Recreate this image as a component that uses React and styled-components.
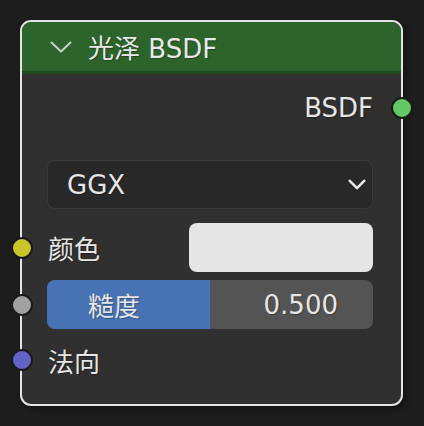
import React from "react";
import styled, { createGlobalStyle } from "styled-components";

const Global = createGlobalStyle`
  html, body { margin: 0; padding: 0; background: #1d1d1d; }
  body { font-family: "DejaVu Sans", "Noto Sans CJK SC", sans-serif; }
`;

const Page = styled.div`
  width: 424px;
  height: 426px;
  padding: 20px 0 0 20px;
  box-sizing: border-box;
`;

const Node = styled.div`
  width: 383px;
  height: 386px;
  box-sizing: border-box;
  border: 2px solid #e3e3e3;
  border-radius: 11px;
  background: #303030;
  display: flex;
  flex-direction: column;
  box-shadow: 3px 3px 6px rgba(0, 0, 0, 0.35);
`;

const Header = styled.div`
  height: 49px;
  border-bottom: 3px solid #1f4a1f;
  background: #2c642c;
  border-radius: 9px 9px 0 0;
  display: flex;
  align-items: center;
  padding-left: 28px;
  gap: 16px;
  color: #e8e8e8;
  font-size: 26px;
  text-shadow: 1px 1px 1px rgba(0, 0, 0, 0.3);
`;

const Body = styled.div`
  display: flex;
  flex-direction: column;
  padding: 14px 28px 0 25px;
  color: #e6e6e6;
  font-size: 26px;
  text-shadow: 1px 1px 1px rgba(0, 0, 0, 0.3);
`;

const Row = styled.div`
  position: relative;
  height: ${(p) => p.h || 40}px;
  margin-top: ${(p) => p.mt || 0}px;
  display: flex;
  align-items: center;
  justify-content: ${(p) => (p.right ? "flex-end" : "flex-start")};
`;

const Label = styled.span`
  padding-left: 1px;
`;

const Socket = styled.span`
  position: absolute;
  top: 50%;
  width: 18px;
  height: 18px;
  margin-top: -11px;
  border: 2px solid #1a1a1a;
  border-radius: 50%;
  background: ${(p) => p.color};
  ${(p) => (p.side === "right" ? "right: -40px;" : "left: -36px;")}
`;

const Dropdown = styled.div`
  height: 49px;
  margin-top: 32px;
  box-sizing: border-box;
  border: 1px solid #3a3a3a;
  border-radius: 8px;
  background: #282828;
  display: flex;
  align-items: center;
  justify-content: space-between;
  padding: 0 6px 0 19px;
`;

const Swatch = styled.div`
  margin-left: auto;
  width: 184px;
  height: 49px;
  border-radius: 8px;
  background: #e6e6e6;
`;

const Slider = styled.div`
  flex: 1;
  height: 49px;
  border-radius: 8px;
  background: #545454;
  position: relative;
  overflow: hidden;
  display: flex;
  align-items: center;
  justify-content: space-between;
  padding: 0 35px 0 41px;
  box-sizing: border-box;
`;

const Fill = styled.div`
  position: absolute;
  left: 0;
  top: 0;
  bottom: 0;
  background: #4772b3;
`;

const SliderText = styled.span`
  position: relative;
`;

const Chevron = ({ w, h, sw, color }) => (
  <svg width={w} height={h} viewBox={`0 0 ${w} ${h}`}>
    <polyline
      points={`${sw / 2 + 0.5},${sw / 2 + 0.5} ${w / 2},${h - sw / 2 - 0.5} ${w - sw / 2 - 0.5},${sw / 2 + 0.5}`}
      fill="none"
      stroke={color}
      strokeWidth={sw}
      strokeLinecap="round"
      strokeLinejoin="round"
    />
  </svg>
);

export default function App() {
  const value = 0.5;
  return (
    <>
      <Global />
      <Page>
        <Node>
          <Header>
            <Chevron w={22} h={12} sw={2} color="#c8d0c8" />
            <span>光泽 BSDF</span>
          </Header>
          <Body>
            <Row right>
              <Label>BSDF</Label>
              <Socket side="right" color="#63c763" />
            </Row>
            <Dropdown>
              <span>GGX</span>
              <Chevron w={18} h={11} sw={2.6} color="#e6e6e6" />
            </Dropdown>
            <Row h={49} mt={14}>
              <Label>颜色</Label>
              <Swatch />
              <Socket color="#c7c729" />
            </Row>
            <Row h={49} mt={8}>
              <Slider>
                <Fill style={{ width: `${value * 100}%` }} />
                <SliderText>糙度</SliderText>
                <SliderText>0.500</SliderText>
              </Slider>
              <Socket color="#a1a1a1" />
            </Row>
            <Row h={40} mt={11}>
              <Label>法向</Label>
              <Socket color="#6363c7" />
            </Row>
          </Body>
        </Node>
      </Page>
    </>
  );
}
